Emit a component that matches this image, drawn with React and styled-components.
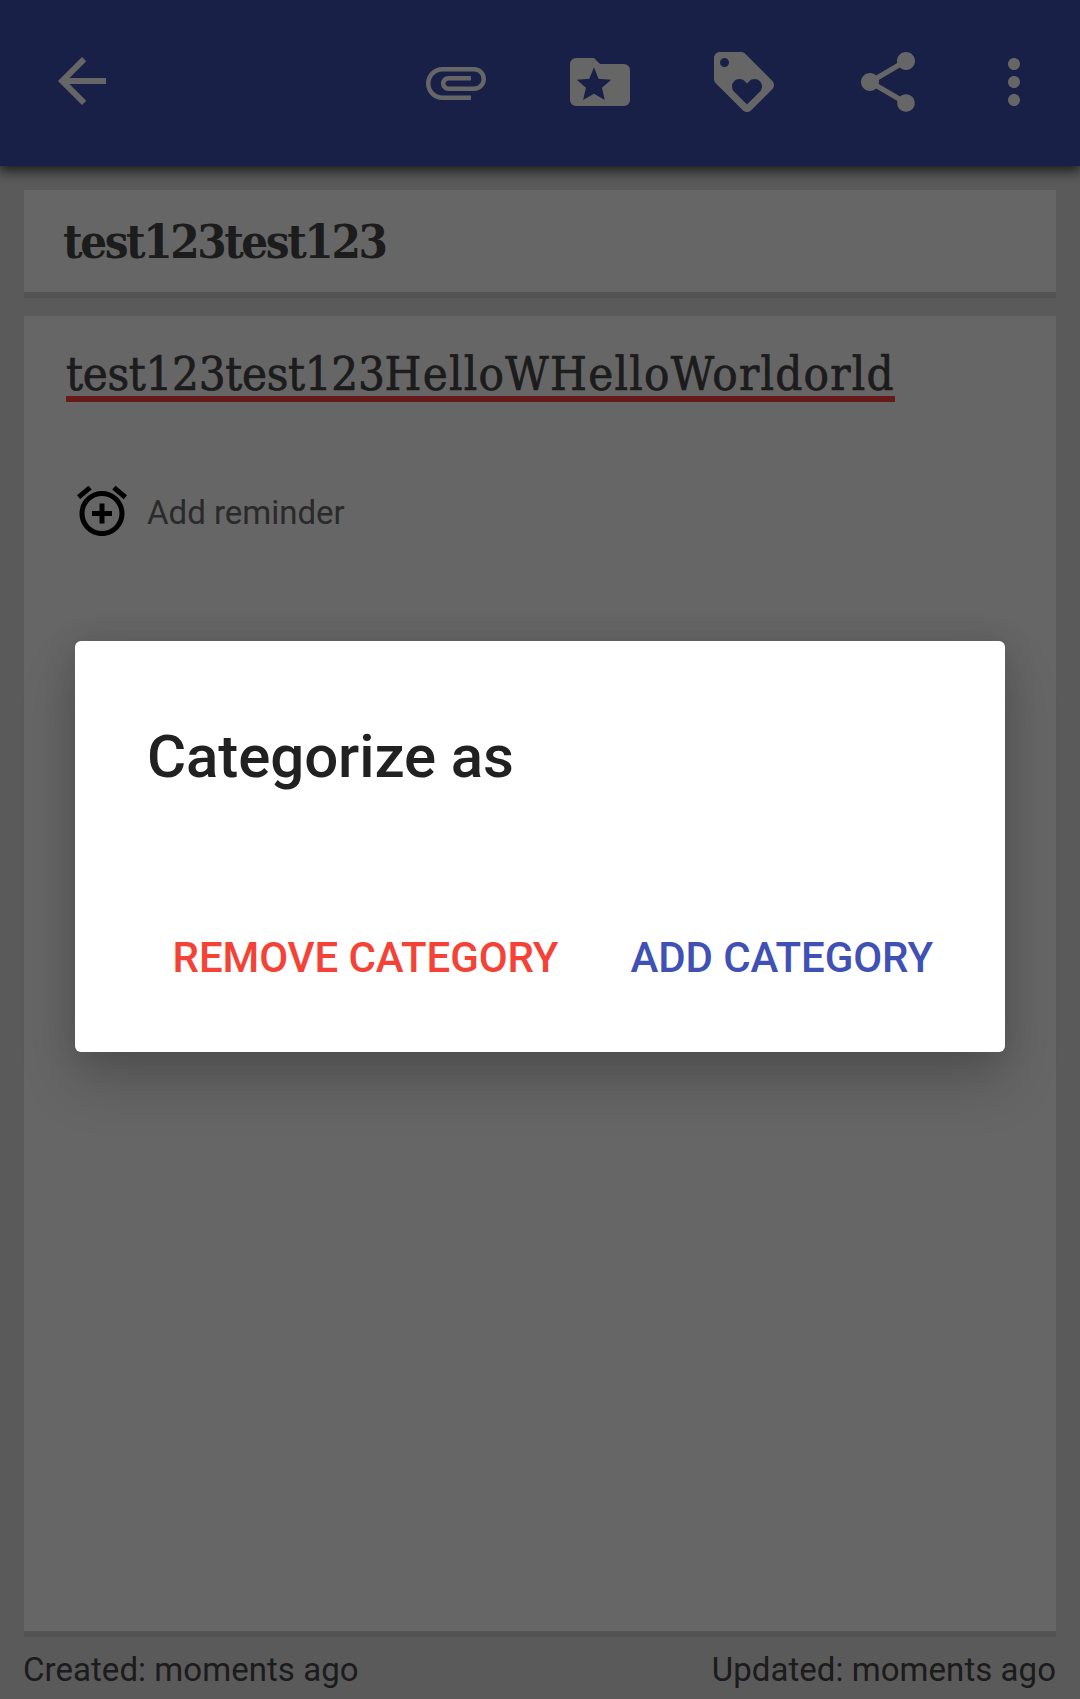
import React from 'react';
import styled, { createGlobalStyle } from 'styled-components';

const GlobalStyle = createGlobalStyle`
  *, *::before, *::after { box-sizing: border-box; }
  body { margin: 0; font-family: Roboto, "Liberation Sans", sans-serif; }
  button { border: 0; padding: 0; margin: 0; background: none; font: inherit; color: inherit; }
`;

const Screen = styled.div`
  position: relative;
  display: flex;
  flex-direction: column;
  width: 1080px;
  height: 1699px;
  overflow: hidden;
  background: #e2e2e2;
`;

const Toolbar = styled.header`
  position: relative;
  flex: none;
  display: flex;
  align-items: flex-start;
  height: 166px;
  padding: 45px 30px 0 46px;
  background: #3f51b5;
  color: #fff;
  box-shadow: 0 3px 12px 2px rgba(0, 0, 0, 0.7);
`;

const Actions = styled.div`
  display: flex;
  gap: 72px;
  margin: 1px 54px 0 auto;
`;

const IconButton = styled.button`
  display: block;
  width: 72px;
  height: 72px;
  margin-top: ${(p) => p.$drop || 0}px;
  svg { display: block; width: 100%; height: 100%; fill: currentColor; }
`;

const Main = styled.main`
  flex: 1;
  display: flex;
  flex-direction: column;
  gap: 18px;
  padding: 24px 24px 0;
`;

const Card = styled.section`
  background: #fff;
  border-bottom: 6px solid #cfcfcf;
`;

const TitleCard = styled(Card)`
  height: 108px;
  padding: 22px 39px 0;
`;

const BodyCard = styled(Card)`
  height: 1321px;
  padding: 27px 42px 0;
`;

const slab = `"Roboto Slab", "DejaVu Serif Condensed", "DejaVu Serif", serif`;

const NoteTitle = styled.h1`
  margin: 0;
  font: 700 47px/60px ${slab};
  letter-spacing: -2.4px;
  color: #464646;
`;

const NoteText = styled.p`
  width: 829px;
  height: 59px;
  margin: 0;
  border-bottom: 6px solid #ff4141;
  font: 400 47px/62px ${slab};
  -webkit-text-stroke: 0.7px #464646;
  white-space: nowrap;
  color: #464646;
`;

const Run = styled.span`
  letter-spacing: ${(p) => p.$tracking}px;
`;

const Reminder = styled.div`
  display: flex;
  align-items: center;
  gap: 15px;
  margin-top: 79px;
  padding-left: 6px;
  font-size: 33px;
  line-height: 60px;
  color: #6a6a6a;
  svg { width: 60px; height: 60px; margin-bottom: 4px; fill: #000; }
`;

const Footer = styled.footer`
  display: flex;
  justify-content: space-between;
  margin: -5px 0 0 -1px;
  font-size: 33px;
  line-height: 40px;
  letter-spacing: 0.05px;
  color: #464646;
`;

const Scrim = styled.div`
  position: absolute;
  inset: 0;
  display: flex;
  align-items: flex-start;
  justify-content: center;
  padding-top: 641px;
  background: rgba(0, 0, 0, 0.6);
`;

const Dialog = styled.div`
  display: flex;
  flex-direction: column;
  justify-content: space-between;
  width: 930px;
  height: 411px;
  padding: 80px 72px 64px;
  border-radius: 6px;
  background: #fff;
  box-shadow: 0 30px 56px rgba(0, 0, 0, 0.19), 0 2px 32px rgba(0, 0, 0, 0.13);
`;

const DialogTitle = styled.h2`
  margin: 0;
  font-size: 60px;
  line-height: 72px;
  font-weight: 500;
  letter-spacing: -0.1px;
  color: #212121;
`;

const DialogActions = styled.div`
  display: flex;
  justify-content: flex-end;
  gap: 72px;
`;

const TextButton = styled.button`
  font-size: 42px;
  line-height: 60px;
  font-weight: 500;
  letter-spacing: -0.1px;
  text-transform: uppercase;
  color: ${(p) => p.$color};
`;

const Icon = ({ d }) => (
  <svg viewBox="0 0 24 24"><path fillRule="evenodd" d={d} /></svg>
);

const paths = {
  back: 'M20 11H7.83l5.59-5.59L12 4l-8 8 8 8 1.41-1.41L7.83 13H20v-2z',
  attach: 'M7.5 18C4.46 18 2 15.54 2 12.5S4.46 7 7.5 7H18c2.21 0 4 1.79 4 4s-1.79 4-4 4H9.5C8.12 15 7 13.88 7 12.5S8.12 10 9.5 10H17v1.5H9.5c-.55 0-1 .45-1 1s.45 1 1 1H18c1.38 0 2.5-1.12 2.5-2.5S19.38 8.5 18 8.5H7.5c-2.21 0-4 1.79-4 4s1.79 4 4 4H17V18H7.5z',
  folder: 'M20 6H12L10 4H4A2 2 0 0 0 2 6V18A2 2 0 0 0 4 20H20A2 2 0 0 0 22 18V8A2 2 0 0 0 20 6zM10 7.1L11.5 10.9L15.75 11.25L12.65 13.95L13.6 18L10 15.9L6.35 18L7.3 13.95L4.25 11.25L8.43 10.9z',
  loyalty: 'M21.41 11.58l-9-9C12.05 2.22 11.55 2 11 2H4c-1.1 0-2 .9-2 2v7c0 .55.22 1.05.59 1.42l9 9c.36.36.86.58 1.41.58.55 0 1.05-.22 1.41-.59l7-7c.37-.36.59-.86.59-1.41 0-.55-.23-1.06-.59-1.42zM5.5 7C4.67 7 4 6.33 4 5.5S4.67 4 5.5 4 7 4.67 7 5.5 6.33 7 5.5 7zm11.77 8.27L13 19.54l-4.27-4.27C8.28 14.81 8 14.19 8 13.5c0-1.38 1.12-2.5 2.5-2.5.69 0 1.32.28 1.77.74l.73.72.73-.73c.45-.45 1.08-.73 1.77-.73 1.38 0 2.5 1.12 2.5 2.5 0 .69-.28 1.32-.73 1.77z',
  share: 'M18 16.08c-.76 0-1.44.3-1.96.77L8.91 12.7c.05-.23.09-.46.09-.7s-.04-.47-.09-.7l7.05-4.11c.54.5 1.25.81 2.04.81 1.66 0 3-1.34 3-3s-1.34-3-3-3-3 1.34-3 3c0 .24.04.47.09.7L8.04 9.81C7.5 9.31 6.79 9 6 9c-1.66 0-3 1.34-3 3s1.34 3 3 3c.79 0 1.5-.31 2.04-.81l7.12 4.16c-.05.21-.08.43-.08.65 0 1.61 1.31 2.92 2.92 2.92s2.92-1.31 2.92-2.92-1.31-2.92-2.92-2.92z',
  more: 'M12 8c1.1 0 2-.9 2-2s-.9-2-2-2-2 .9-2 2 .9 2 2 2zm0 2c-1.1 0-2 .9-2 2s.9 2 2 2 2-.9 2-2-.9-2-2-2zm0 6c-1.1 0-2 .9-2 2s.9 2 2 2 2-.9 2-2-.9-2-2-2z',
  alarm: 'M7.88 3.39L6.6 1.86 2 5.71l1.29 1.53 4.59-3.85zM22 5.72l-4.6-3.86-1.29 1.53 4.6 3.86L22 5.72zM12 4c-4.97 0-9 4.03-9 9s4.02 9 9 9c4.97 0 9-4.03 9-9s-4.03-9-9-9zm0 16c-3.87 0-7-3.13-7-7s3.13-7 7-7 7 3.13 7 7-3.13 7-7 7zm1-11h-2v3H8v2h3v3h2v-3h3v-2h-3V9z',
};

const actions = [
  ['Attach', 'attach'],
  ['Categorize', 'folder'],
  ['Tag', 'loyalty'],
  ['Share', 'share'],
];

export default function App() {
  return (
    <Screen>
      <GlobalStyle />
      <Toolbar>
        <IconButton aria-label="Back"><Icon d={paths.back} /></IconButton>
        <Actions>
          {actions.map(([label, name]) => (
            <IconButton key={name} aria-label={label}><Icon d={paths[name]} /></IconButton>
          ))}
        </Actions>
        <IconButton aria-label="More options" $drop={1}><Icon d={paths.more} /></IconButton>
      </Toolbar>
      <Main>
        <TitleCard><NoteTitle>test123test123</NoteTitle></TitleCard>
        <BodyCard>
          <NoteText>
            <Run $tracking={-0.3}>test123test123</Run>
            <Run $tracking={1.27}>HelloWHelloWorldorld</Run>
          </NoteText>
          <Reminder><Icon d={paths.alarm} /><span>Add reminder</span></Reminder>
        </BodyCard>
        <Footer>
          <span>Created: moments ago</span>
          <span>Updated: moments ago</span>
        </Footer>
      </Main>
      <Scrim>
        <Dialog role="dialog">
          <DialogTitle>Categorize as</DialogTitle>
          <DialogActions>
            <TextButton $color="#f44336">Remove category</TextButton>
            <TextButton $color="#3f51b5">Add category</TextButton>
          </DialogActions>
        </Dialog>
      </Scrim>
    </Screen>
  );
}
